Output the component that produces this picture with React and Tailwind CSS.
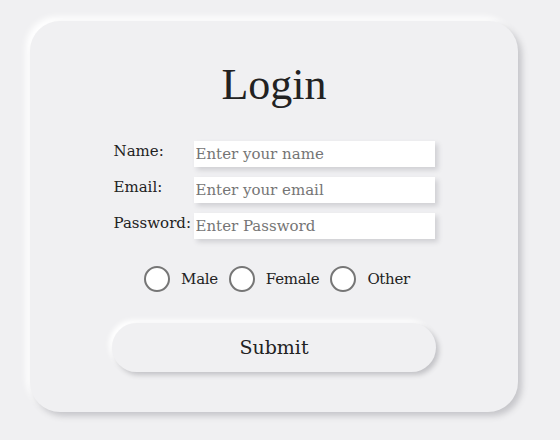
export default function App() {
  const fields = [
    { label: "Name:", placeholder: "Enter your name", type: "text" },
    { label: "Email:", placeholder: "Enter your email", type: "email" },
    { label: "Password:", placeholder: "Enter Password", type: "password" },
  ];

  const genders = ["Male", "Female", "Other"];

  return (
    <div
      className="min-h-[440px] bg-[#f0f0f2] pl-[30px] pt-[21px] text-[#222]"
      style={{ fontFamily: '"DejaVu Serif", "Liberation Serif", serif' }}
    >
      <div className="flex h-[391px] w-[488px] flex-col items-center rounded-[30px] bg-[#f0f0f2] shadow-[4px_4px_6px_#c6c6ca,-4px_-4px_6px_#ffffff]">
        <h1
          className="mt-[42px] text-[44px] leading-none"
          style={{ fontFamily: '"Liberation Serif", serif' }}
        >
          Login
        </h1>

        <div className="mt-[34px] flex flex-col gap-[10px]">
          {fields.map((field) => (
            <div key={field.label} className="flex items-start">
              <label className="w-[80px] text-[15px] leading-[20px]">
                {field.label}
              </label>
              <input
                type={field.type}
                placeholder={field.placeholder}
                className="h-[26px] w-[241px] bg-white px-[2px] text-[15px] shadow-[3px_3px_5px_#cfcfd3] outline-none placeholder:text-[#757575]"
              />
            </div>
          ))}
        </div>

        <div className="mt-[27px] flex items-center gap-[11px] pl-[6px] text-[15px]">
          {genders.map((g) => (
            <label key={g} className="flex items-center gap-[11px]">
              <span className="h-[26px] w-[26px] rounded-full border-2 border-[#767676] bg-white" />
              <span className="tracking-[-0.3px]">{g}</span>
            </label>
          ))}
        </div>

        <button
          type="button"
          className="mt-[31px] h-[49px] w-[324px] rounded-full bg-[#f0f0f2] text-[19px] shadow-[3px_3px_5px_#c3c3c7,-3px_-3px_5px_#ffffff]"
        >
          Submit
        </button>
      </div>
    </div>
  );
}
